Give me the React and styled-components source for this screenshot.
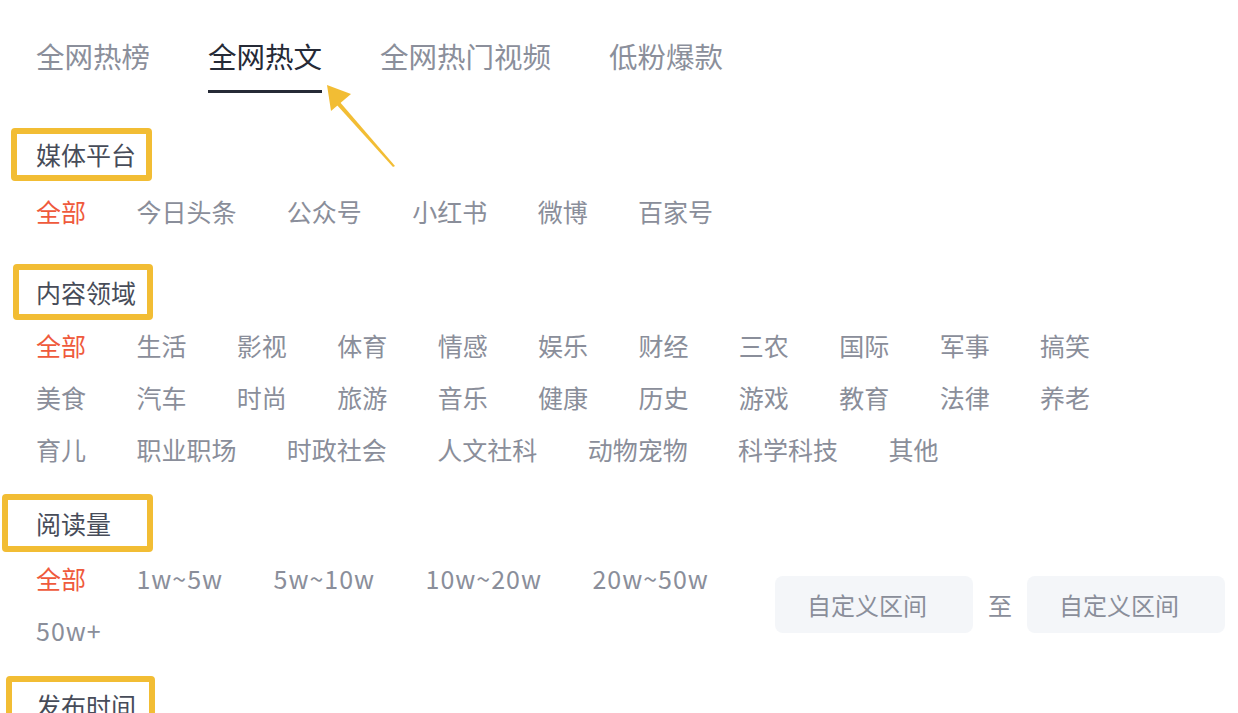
import React, { useState } from "react";
import styled, { createGlobalStyle } from "styled-components";

const Global = createGlobalStyle`
  html, body { margin: 0; padding: 0; background: #ffffff; overflow: hidden; }
  body { font-family: "Noto Sans CJK SC", "Noto Sans", sans-serif; }
  * { box-sizing: border-box; }
`;

const Page = styled.div`
  position: relative;
  width: 1238px;
  height: 713px;
  padding-left: 36px;
  overflow: hidden;
`;

const Tabs = styled.div`
  display: flex;
  gap: 58px;
  padding-top: 36px;
`;

const Tab = styled.div`
  font-size: 28.5px;
  line-height: 40px;
  padding-bottom: 14px;
  border-bottom: 3px solid ${(p) => (p.$active ? "#262a36" : "transparent")};
  color: ${(p) => (p.$active ? "#262a36" : "#8b8f9b")};
  cursor: pointer;
  white-space: nowrap;
`;

const Section = styled.section`
  margin-top: ${(p) => p.$top}px;
`;

const Label = styled.div`
  position: relative;
  display: inline-block;
  font-size: 25px;
  line-height: 34px;
  color: #474c59;
`;

const Highlight = styled.span`
  position: absolute;
  left: ${(p) => p.$left}px;
  top: ${(p) => p.$top}px;
  width: ${(p) => p.$width}px;
  height: ${(p) => p.$height}px;
  border: 6px solid #f2bd34;
  border-radius: 4px;
  pointer-events: none;
`;

const Options = styled.div`
  display: flex;
  flex-wrap: wrap;
  column-gap: 50.4px;
  width: ${(p) => p.$width}px;
  margin-top: ${(p) => p.$gap || 0}px;
`;

const Option = styled.div`
  font-size: 25px;
  line-height: 52px;
  letter-spacing: ${(p) => p.$spacing || 0}px;
  color: ${(p) => (p.$active ? "#ef5a3c" : "#8a8e9a")};
  white-space: nowrap;
  cursor: pointer;
`;

const ReadRow = styled.div`
  display: flex;
  align-items: center;
  margin-top: 12px;
`;

const Range = styled.div`
  display: flex;
  align-items: center;
  gap: 15px;
  margin-left: 19px;
`;

const RangeBox = styled.div`
  width: 198px;
  height: 57px;
  border-radius: 8px;
  background: #f4f6f9;
  color: #8a8e9a;
  font-size: 24px;
  padding-left: 32px;
  display: flex;
  align-items: center;
`;

const To = styled.span`
  font-size: 24px;
  color: #8a8e9a;
`;

const Arrow = styled.svg`
  position: absolute;
  left: 0;
  top: 0;
  pointer-events: none;
`;

const platforms = ["全部", "今日头条", "公众号", "小红书", "微博", "百家号"];
const domains = [
  "全部", "生活", "影视", "体育", "情感", "娱乐", "财经", "三农", "国际", "军事", "搞笑",
  "美食", "汽车", "时尚", "旅游", "音乐", "健康", "历史", "游戏", "教育", "法律", "养老",
  "育儿", "职业职场", "时政社会", "人文社科", "动物宠物", "科学科技", "其他",
];
const reads = ["全部", "1w~5w", "5w~10w", "10w~20w", "20w~50w", "50w+"];

function OptionList({ items, width, gap }) {
  const [sel, setSel] = useState(0);
  return (
    <Options $width={width} $gap={gap}>
      {items.map((t, i) => (
        <Option key={t} $active={i === sel} onClick={() => setSel(i)}>
          {t}
        </Option>
      ))}
    </Options>
  );
}

function SectionLabel({ children, box }) {
  return (
    <Label>
      {children}
      <Highlight $left={box[0]} $top={box[1]} $width={box[2]} $height={box[3]} />
    </Label>
  );
}

export default function App() {
  const [tab, setTab] = useState(1);
  const tabs = ["全网热榜", "全网热文", "全网热门视频", "低粉爆款"];
  const [rs, setRs] = useState(0);
  return (
    <>
      <Global />
      <Page>
        <Tabs>
          {tabs.map((t, i) => (
            <Tab key={t} $active={i === tab} onClick={() => setTab(i)}>
              {t}
            </Tab>
          ))}
        </Tabs>

        <Section $top={44}>
          <SectionLabel box={[-25, -9, 141, 53]}>媒体平台</SectionLabel>
          <OptionList items={platforms} width={1100} gap={14} />
        </Section>

        <Section $top={38}>
          <SectionLabel box={[-23, -11, 140, 56]}>内容领域</SectionLabel>
          <OptionList items={domains} width={1100} gap={10} />
        </Section>

        <Section $top={31}>
          <SectionLabel box={[-34, -12, 151, 58]}>阅读量</SectionLabel>
          <ReadRow>
            <Options $width={720}>
              {reads.map((t, i) => (
                <Option
                  key={t}
                  $active={i === rs}
                  $spacing={i === 0 ? 0 : 1}
                  onClick={() => setRs(i)}
                >
                  {t}
                </Option>
              ))}
            </Options>
            <Range>
              <RangeBox>自定义区间</RangeBox>
              <To>至</To>
              <RangeBox>自定义区间</RangeBox>
            </Range>
          </ReadRow>
        </Section>

        <Section $top={32}>
          <SectionLabel box={[-30, -12, 149, 60]}>发布时间</SectionLabel>
        </Section>

        <Arrow width="1238" height="713" viewBox="0 0 1238 713">
          <polygon points="395,166 393,167 336,104 339,101" fill="#f2bd34" />
          <polygon points="327,85 351,94 331,111" fill="#f2bd34" />
        </Arrow>
      </Page>
    </>
  );
}
